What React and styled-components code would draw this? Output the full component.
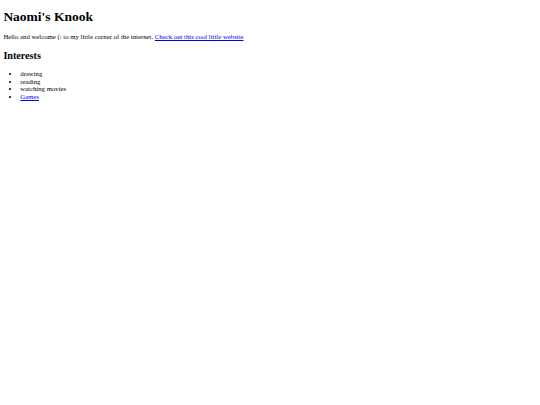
import styled, { createGlobalStyle } from "styled-components";

const GlobalStyle = createGlobalStyle`
  body {
    margin: 3.375px;
    background: #ffffff;
    color: #000000;
    font-family: "Liberation Serif", "Times New Roman", serif;
  }
`;

const Page = styled.main`
  font-size: 6.75px;
`;

const Title = styled.h1`
  font-size: 13.5px;
  font-weight: bold;
  margin: 6px 0 8px;
`;

const Intro = styled.p`
  font-size: 6.75px;
  margin: 6.75px 0;
`;

const Heading = styled.h2`
  font-size: 10.125px;
  font-weight: bold;
  margin: 9.4px 0 9.2px;
`;

const List = styled.ul`
  font-size: 6.75px;
  margin: 6.75px 0;
  padding-left: 16.875px;
`;

const Item = styled.li`
  line-height: 7.6px;
`;

const Link = styled.a`
  color: #0000ee;
  text-decoration: underline;
`;

const interests = ["drawing", "reading", "watching movies"];

const App = () => {
  return (
    <Page>
      <GlobalStyle />
      <Title>Naomi's Knook</Title>
      <Intro>
        Hello and welcome (: to my little corner of the internet.{" "}
        <Link href="#">Check out this cool little website</Link>
      </Intro>
      <Heading>Interests</Heading>
      <List>
        {interests.map((item) => (
          <Item key={item}>{item}</Item>
        ))}
        <Item>
          <Link href="#">Games</Link>
        </Item>
      </List>
    </Page>
  );
};

export default App;
